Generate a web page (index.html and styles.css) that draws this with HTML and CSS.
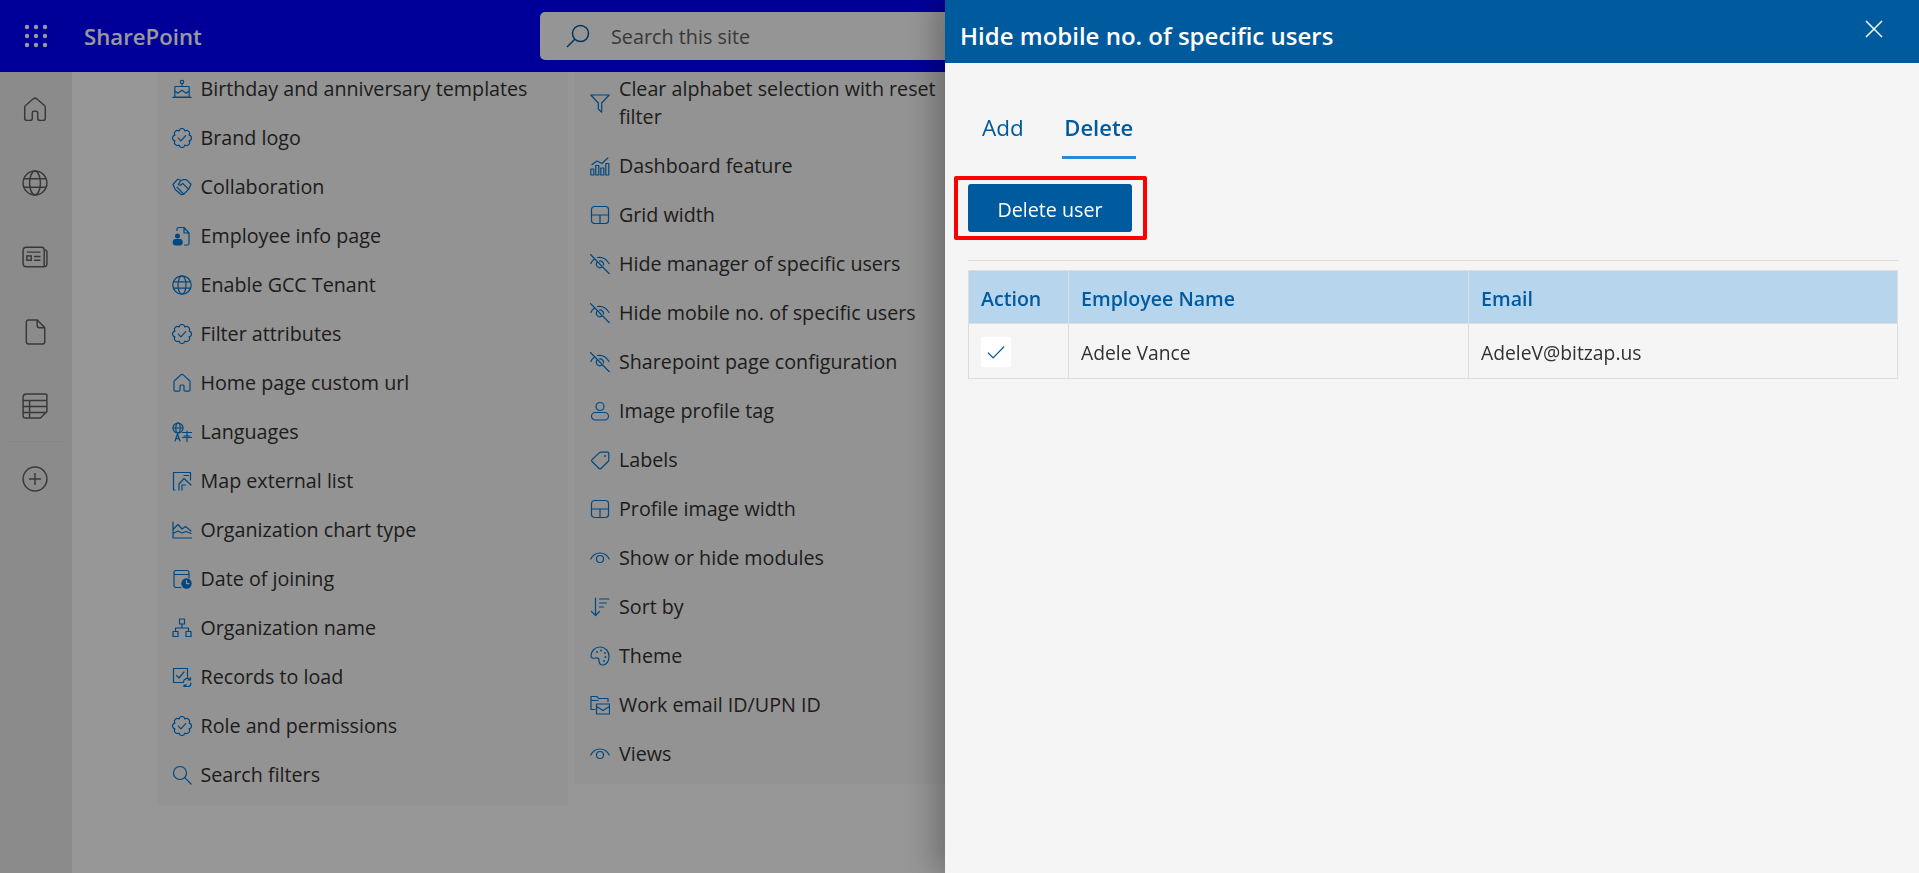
FILE: index.html
```html
<!DOCTYPE html>
<html lang="en">
<head>
<meta charset="utf-8">
<title>Hide mobile no. of specific users</title>
<link rel="stylesheet" href="styles.css">
</head>
<body>
<svg class="sprite" aria-hidden="true">
  <symbol id="badge" viewBox="0 0 20 20"><path d="M12.91 2.98A2.95 2.95 0 0 1 17.02 7.09A2.95 2.95 0 0 1 17.02 12.91A2.95 2.95 0 0 1 12.91 17.02A2.95 2.95 0 0 1 7.09 17.02A2.95 2.95 0 0 1 2.98 12.91A2.95 2.95 0 0 1 2.98 7.09A2.95 2.95 0 0 1 7.09 2.98A2.95 2.95 0 0 1 12.91 2.98Z"/><path d="M6.3 10.2l2.6 2.6 4.8-5.200"/></symbol>
  <symbol id="globe" viewBox="0 0 20 20"><circle cx="10" cy="10" r="9.200"/><ellipse cx="10" cy="10" rx="4" ry="9.200"/><path d="M1.600 6.800h16.800M1.600 13.200h16.800"/></symbol>
  <symbol id="home" viewBox="0 0 20 20"><path d="M8.800 1.900a1.800 1.800 0 0 1 2.400 0l6.200 5.600c.4.300.6.800.6 1.300V17a1.200 1.200 0 0 1-1.200 1.200h-3.600A1.200 1.200 0 0 1 12 17v-4a1 1 0 0 0-1-1H9a1 1 0 0 0-1 1v4a1.200 1.200 0 0 1-1.200 1.200H3.200A1.200 1.200 0 0 1 2 17V8.800c0-.5.2-1 .6-1.300z"/></symbol>
  <symbol id="grid" viewBox="0 0 20 20"><rect x="1.500" y="1.500" width="17" height="17" rx="3"/><path d="M1.500 10h17M10 10v8.500"/></symbol>
  <symbol id="eyeoff" viewBox="0 0 20 20"><path d="M4 5.500C2.500 6.500 1.500 8 .8 9.500M7.500 3.500c4.500-.8 9 1.500 11.500 6M6.800 8.500a3.500 3.500 0 0 0 4.700 4.800M13.500 11a3.500 3.500 0 0 0-4-4M.5 .5l19 19.500"/></symbol>
  <symbol id="eye" viewBox="0 0 20 20"><path d="M.8 11C3 6.500 6.500 5 10 5s7 1.500 9.200 6"/><circle cx="10" cy="11" r="3.500"/></symbol>
</svg>

<div class="page">
  <header class="topbar">
    <svg class="waffle" viewBox="0 0 24 24"><circle cx="3" cy="3" r="2.200"/><circle cx="12" cy="3" r="2.200"/><circle cx="21" cy="3" r="2.200"/><circle cx="3" cy="12" r="2.200"/><circle cx="12" cy="12" r="2.200"/><circle cx="21" cy="12" r="2.200"/><circle cx="3" cy="21" r="2.200"/><circle cx="12" cy="21" r="2.200"/><circle cx="21" cy="21" r="2.200"/></svg>
    <span class="brand">SharePoint</span>
    <div class="search">
      <svg class="search-icon" viewBox="0 0 24 24"><circle cx="14.500" cy="9.500" r="8"/><path d="M8.800 15.200 1 23"/></svg>
      <span class="search-text">Search this site</span>
    </div>
  </header>
  <div class="content">
    <nav class="rail">
      <svg class="rail-icon" viewBox="0 0 24 24"><path d="M10.500 2.600a2.300 2.300 0 0 1 3 0l7.200 6.200c.5.400.8 1.100.8 1.700v10a2 2 0 0 1-2 2h-3a2 2 0 0 1-2-2v-5a1.500 1.500 0 0 0-1.500-1.500h-2a1.500 1.500 0 0 0-1.500 1.500v5a2 2 0 0 1-2 2h-3a2 2 0 0 1-2-2v-10c0-.6.300-1.300.8-1.700z"/></svg>
      <svg class="rail-icon" viewBox="0 0 24 24"><circle cx="12" cy="12" r="11"/><ellipse cx="12" cy="12" rx="5" ry="11"/><path d="M1.800 8h20.400M1.800 16h20.400"/></svg>
      <svg class="rail-icon" viewBox="0 0 24 24"><path d="M20.500 5.500h.500a2 2 0 0 1 2 2V18a3 3 0 0 1-3 3H4a3 3 0 0 1-3-3V6a3 3 0 0 1 3-3h14a2.500 2.500 0 0 1 2.500 2.500V21"/><rect x="4.500" y="11" width="4" height="4"/><path d="M4.500 7.500h12.500M11 11.500h6M11 15h6"/></svg>
      <svg class="rail-icon" viewBox="0 0 24 24"><path d="M6 1h8l7 7v13a2 2 0 0 1-2 2H6a2 2 0 0 1-2-2V3a2 2 0 0 1 2-2zM14 1.500V6a2 2 0 0 0 2 2h4.500"/></svg>
      <svg class="rail-icon" viewBox="0 0 24 24"><path d="M4 1h18a1 1 0 0 1 1 1v15l-6 6H3a2 2 0 0 1-2-2V4a3 3 0 0 1 3-3zM1 7h22M1 12.500h22M1 18h22M7 7v16"/></svg>
      <div class="rail-sep"></div>
      <svg class="rail-icon" viewBox="0 0 24 24"><circle cx="12" cy="12" r="11"/><path d="M12 6.500v11M6.500 12h11"/></svg>
    </nav>
    <main class="main">
      <ul class="card card-a">
        <li class="row"><svg class="ico" viewBox="0 0 20 20"><circle cx="10" cy="3" r="1.700"/><path d="M10 4.700V7M3.500 7.500h13a.7.7 0 0 1 .7.7V18H2.800V8.200a.7.7 0 0 1 .7-.7zM2.800 12l3 2.200 4.200-3 4.200 3 3-2.200M.8 18.400h18.400"/></svg><span>Birthday and anniversary templates</span></li>
        <li class="row"><svg class="ico"><use href="#badge"/></svg><span>Brand logo</span></li>
        <li class="row"><svg class="ico" viewBox="0 0 20 20"><path d="M1 7.500 5.500 2.300l3.500 1.200 2.500-1 2.800.1 4.700 4.600-2 4.600-5.600 5.700-2 .2-6.200-5.200zM9 3.500 6.300 7.300c.9 1.100 2.200 1 3.200.2l1.200-1.200 5.200 5.200M6.800 12l2.700 2.700M5 10.200l2.600 2.600M9 14.500l2.200 2.200"/></svg><span>Collaboration</span></li>
        <li class="row"><svg class="ico" viewBox="0 0 20 20"><path d="M5 4.500V3a1.500 1.500 0 0 1 1.500-1.500H12L17 7v10.500A1.500 1.500 0 0 1 15.500 19H12.500M12 1.500V7h5"/><circle class="solid" cx="5.500" cy="10" r="2.500"/><rect class="solid" x=".7" y="13" width="10" height="6.500" rx="3"/></svg><span>Employee info page</span></li>
        <li class="row"><svg class="ico"><use href="#globe"/></svg><span>Enable GCC Tenant</span></li>
        <li class="row"><svg class="ico"><use href="#badge"/></svg><span>Filter attributes</span></li>
        <li class="row"><svg class="ico"><use href="#home"/></svg><span>Home page custom url</span></li>
        <li class="row"><svg class="ico" viewBox="0 0 20 20"><circle cx="6" cy="6" r="5"/><ellipse cx="6" cy="6" rx="2.200" ry="5"/><path d="M1 6h10M3 19l2.500-7 2.500 7M3.800 16.700h3.400M10.500 10.500h9M15 9v10.500M12 14h6M10.500 15.500h9"/></svg><span>Languages</span></li>
        <li class="row"><svg class="ico" viewBox="0 0 20 20"><path d="M3 19H1.500V1.500h17V9M7 19v-6l5-5.500 7 6.500M10 19v-5h3.500M12 4.500h4.500"/></svg><span>Map external list</span></li>
        <li class="row"><svg class="ico" viewBox="0 0 20 20"><path d="M1 2v16h18.500M1 9.500l5-5 4 4.500 3.500-2.500 5.500 4.500M1 13.500l5-2.500 4 2 4-1.500 5 2"/></svg><span>Organization chart type</span></li>
        <li class="row"><svg class="ico" viewBox="0 0 20 20"><path d="M9 18.500H4a2 2 0 0 1-2-2V3.500a2 2 0 0 1 2-2h11a2 2 0 0 1 2 2V9M2 5.500h15"/><circle class="solid" cx="14.500" cy="14.500" r="5.200"/><path class="hand" d="M14.500 11.500v3.200h2.500"/></svg><span>Date of joining</span></li>
        <li class="row"><svg class="ico" viewBox="0 0 20 20"><rect x="7.500" y="1" width="5" height="5"/><rect x="1" y="13.500" width="5" height="5"/><rect x="14" y="13.500" width="5" height="5"/><path d="M10 6v4M3.500 13.500V10h13v3.500"/></svg><span>Organization name</span></li>
        <li class="row"><svg class="ico" viewBox="0 0 20 20"><path d="M11 15.500H1.500V1.500h14V11M4.500 8.500l2.500 2.500 5-6M11.500 15a3.700 3.700 0 0 1 6.500-2.300M19 16a3.700 3.700 0 0 1-6.500 2.500M18.500 10.500v2.500H16M12 20v-2h2.500"/></svg><span>Records to load</span></li>
        <li class="row"><svg class="ico"><use href="#badge"/></svg><span>Role and permissions</span></li>
        <li class="row"><svg class="ico" viewBox="0 0 20 20"><circle cx="8" cy="8" r="6.500"/><path d="M12.700 12.700 19 19"/></svg><span>Search filters</span></li>
      </ul>
      <ul class="card card-b">
        <li class="row"><svg class="ico" viewBox="0 0 20 20"><path d="M.8 2h18.400l-7.500 8v9.200L8.300 16v-6z"/></svg><span>Clear alphabet selection with reset filter</span></li>
        <li class="row"><svg class="ico" viewBox="0 0 20 20"><rect x=".8" y="13" width="3" height="6"/><rect x="5.800" y="9.500" width="3" height="9.500"/><rect x="10.800" y="12" width="3" height="7"/><rect x="15.800" y="7.500" width="3" height="11.500"/><path d="M2 8.500l5-3.500 5 2.500 5.800-5.500"/></svg><span>Dashboard feature</span></li>
        <li class="row"><svg class="ico"><use href="#grid"/></svg><span>Grid width</span></li>
        <li class="row"><svg class="ico"><use href="#eyeoff"/></svg><span>Hide manager of specific users</span></li>
        <li class="row"><svg class="ico"><use href="#eyeoff"/></svg><span>Hide mobile no. of specific users</span></li>
        <li class="row"><svg class="ico"><use href="#eyeoff"/></svg><span>Sharepoint page configuration</span></li>
        <li class="row"><svg class="ico" viewBox="0 0 20 20"><circle cx="10" cy="5.500" r="4"/><rect x="1.500" y="11.500" width="17" height="7.500" rx="3.700"/></svg><span>Image profile tag</span></li>
        <li class="row"><svg class="ico" viewBox="0 0 20 20"><path d="M10.500 2.200h7a1.300 1.300 0 0 1 1.300 1.300v6.800a1.500 1.500 0 0 1-.4 1L11 18.500a1.300 1.300 0 0 1-1.900 0L2 11.500a1.300 1.300 0 0 1 0-1.900l7.500-7z"/><circle class="solid" cx="15" cy="6" r=".9"/></svg><span>Labels</span></li>
        <li class="row"><svg class="ico"><use href="#grid"/></svg><span>Profile image width</span></li>
        <li class="row"><svg class="ico"><use href="#eye"/></svg><span>Show or hide modules</span></li>
        <li class="row"><svg class="ico" viewBox="0 0 20 20"><path d="M5.500 1v17.500M1.500 14.500l4 4 4-4M9.500 2h9.500M9.500 6h7M9.500 10h4"/></svg><span>Sort by</span></li>
        <li class="row"><svg class="ico" viewBox="0 0 20 20"><path d="M10.500 1a9 9 0 0 0-9.500 9c0 2.500 2.500 2.500 4.500 2 2.500-.5 3.500.500 3.500 2.500 0 2.500 1.500 4.500 4 4.500 3.500 0 6-4 6-8.500a9 9 0 0 0-8.500-9.500z"/><circle class="solid" cx="7" cy="6" r=".9"/><circle class="solid" cx="11" cy="4.500" r=".9"/><circle class="solid" cx="15" cy="7" r=".9"/><circle class="solid" cx="15.500" cy="11" r=".9"/><circle class="solid" cx="14" cy="15" r=".9"/></svg><span>Theme</span></li>
        <li class="row"><svg class="ico" viewBox="0 0 20 20"><path d="M5 14.500H1V1.500h6l1.500 2H18v3M1 5.500h7"/><rect x="6.500" y="9" width="13" height="10"/><path d="M6.500 11.500l6.500 4 6.500-4"/></svg><span>Work email ID/UPN ID</span></li>
        <li class="row"><svg class="ico"><use href="#eye"/></svg><span>Views</span></li>
      </ul>
    </main>
  </div>
</div>

<div class="scrim"></div>

<aside class="panel">
  <header class="panel-head">
    <h1 class="panel-title">Hide mobile no. of specific users</h1>
    <svg class="close" viewBox="0 0 18 18"><path d="M1 1l16 16M17 1 1 17"/></svg>
  </header>
  <div class="panel-body">
    <div class="tabs">
      <span class="tab">Add</span>
      <span class="tab tab-on">Delete</span>
    </div>
    <div class="callout"><button class="btn" type="button">Delete user</button></div>
    <hr class="rule">
    <table class="users">
      <colgroup><col class="c1"><col class="c2"><col></colgroup>
      <thead><tr><th>Action</th><th>Employee Name</th><th>Email</th></tr></thead>
      <tbody><tr>
        <td><span class="check"><svg viewBox="0 0 16 16"><path d="M1.500 8.500l4.200 4.200 8.800-9"/></svg></span></td>
        <td>Adele Vance</td>
        <td>AdeleV@bitzap.us</td>
      </tr></tbody>
    </table>
  </div>
</aside>
</body>
</html>
```

FILE: styles.css
```css
* { box-sizing: border-box; }
html, body { margin: 0; height: 100%; overflow: hidden; }
body { font-family: "Open Sans", "Noto Sans", sans-serif; font-size: 19.700px; color: #323130; background: #fafafa; }
.sprite { position: absolute; width: 0; height: 0; }

.page { display: flex; flex-direction: column; height: 873px; }
.topbar { flex: 0 0 72px; display: flex; align-items: center; background: #0000ff; color: #fff; }
.waffle { width: 24px; height: 24px; margin-left: 24px; fill: #fff; }
.brand { margin-left: 36px; width: 456px; padding-top: 1px; font-size: 22.200px; font-weight: 600; }
.search { width: 1000px; height: 48px; display: flex; align-items: center; background: #f8f8f8; border-radius: 5px; }
.search-icon { width: 24px; height: 24px; margin-left: 26px; fill: none; stroke: #005a9e; stroke-width: 1.500; }
.search-text { margin-left: 21px; font-size: 19.800px; color: #605e5c; }

.content { flex: 1; display: flex; min-height: 0; overflow: hidden; }
.rail { flex: 0 0 72px; display: flex; flex-direction: column; align-items: center; padding: 24px 2px 0 0; background: #e8e8e8; }
.rail-icon { width: 26px; height: 26px; margin-bottom: 48.200px; fill: none; stroke: #605e5c; stroke-width: 1.350; }
.rail-sep { width: 57px; height: 1px; margin: -26px 0 24px; background: #e0e0e0; }

.main { flex: 1; display: flex; align-items: flex-start; gap: 7px; padding-left: 85px; background: #fafafa; }
.card { margin: 0; list-style: none; background: #f5f5f5; padding: 3px 0 16px 15px; display: flex; flex-direction: column; gap: 21px; }
.card-a { flex: 0 0 411px; }
.card-b { flex: 0 0 395px; }
.row { display: flex; align-items: center; gap: 8.500px; line-height: 28px; }
.card-b .row { gap: 9px; }
.ico { flex: 0 0 20px; width: 20px; height: 20px; fill: none; stroke: #0078d4; stroke-width: 1.200; stroke-linecap: round; stroke-linejoin: round; }
.ico .solid { fill: #0078d4; stroke: none; }
.ico .hand { stroke: #f5f5f5; }

.scrim { position: fixed; inset: 0; background: rgba(0, 0, 0, .4); }

.panel { position: fixed; top: 0; right: 0; bottom: 0; width: 974px; display: flex; flex-direction: column; background: #f5f5f5; box-shadow: -8px 0 30px rgba(0, 0, 0, .3); }
.panel-head { flex: 0 0 63px; display: flex; align-items: center; justify-content: space-between; padding: 0 36px 0 15px; background: #005a9e; color: #fff; }
.panel-title { margin: 7px 0 0; font-size: 24px; font-weight: 600; }
.close { width: 18px; height: 18px; margin-top: -5px; fill: none; stroke: #fff; stroke-width: 1.500; }

.panel-body { flex: 1; padding: 47px 21px 0 23px; }
.tabs { display: flex; gap: 36px; height: 49px; padding-left: 12px; color: #005a9e; font-size: 22.500px; }
.tab { padding: 0 2px; line-height: 35px; }
.tab-on { font-size: 22px; padding: 0 2.500px; font-weight: 600; border-bottom: 3px solid #2b88d8; }

.callout { width: 193px; margin: 17px 0 0 -14px; padding: 4px 11px 4px 10px; border: 4px solid #f00; border-radius: 2px; }
.btn { display: block; width: 164px; height: 48px; padding: 2px 0 0; border: 0; border-radius: 3px; background: #005a9e; color: #fff; font: inherit; }
.rule { height: 1px; margin: 20px 0 9px; border: 0; background: #ddd; }

.users { width: 100%; table-layout: fixed; border-collapse: collapse; border: 1px solid #ddd; font-size: 19.300px; }
.c1 { width: 100px; }
.c2 { width: 400px; }
.users th, .users td { padding: 2px 12px 0; border: 1px solid #ddd; text-align: left; }
.users th { height: 53px; background: #b8d5ee; color: #005a9e; font-size: 19.600px; font-weight: 600; }
.users td { height: 55px; color: #323130; }
.check { display: flex; align-items: center; justify-content: center; width: 30px; height: 30px; background: #fff; border-radius: 2px; }
.check svg { width: 20px; height: 20px; fill: none; stroke: #005a9e; stroke-width: 1.100; }
```
